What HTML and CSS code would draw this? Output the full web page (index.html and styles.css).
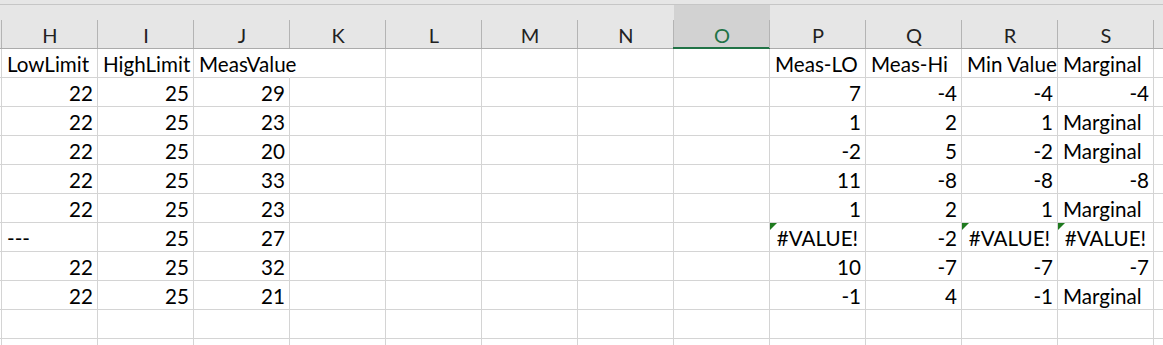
FILE: index.html
```html
<!DOCTYPE html>
<html>
<head>
<meta charset="utf-8">
<link rel="stylesheet" href="styles.css">
</head>
<body>
<div class="sheet">
  <div class="topbar"></div>
  <div class="heads">
    <div class="hd stub"></div>
    <div class="hd">H</div><div class="hd">I</div><div class="hd">J</div><div class="hd">K</div>
    <div class="hd">L</div><div class="hd">M</div><div class="hd">N</div><div class="hd sel">O</div>
    <div class="hd">P</div><div class="hd">Q</div><div class="hd">R</div><div class="hd">S</div>
    <div class="hd tail"></div>
  </div>

  <div class="row">
    <div class="c stub"></div>
    <div class="c">LowLimit</div><div class="c">HighLimit</div><div class="c spill">MeasValue</div><div class="c"></div>
    <div class="c"></div><div class="c"></div><div class="c"></div><div class="c"></div>
    <div class="c">Meas-LO</div><div class="c">Meas-Hi</div><div class="c">Min Value</div><div class="c">Marginal</div>
    <div class="c tail"></div>
  </div>

  <div class="row">
    <div class="c stub"></div>
    <div class="c n">22</div><div class="c n">25</div><div class="c n">29</div><div class="c"></div>
    <div class="c"></div><div class="c"></div><div class="c"></div><div class="c"></div>
    <div class="c n">7</div><div class="c n">-4</div><div class="c n">-4</div><div class="c n">-4</div>
    <div class="c tail"></div>
  </div>

  <div class="row">
    <div class="c stub"></div>
    <div class="c n">22</div><div class="c n">25</div><div class="c n">23</div><div class="c"></div>
    <div class="c"></div><div class="c"></div><div class="c"></div><div class="c"></div>
    <div class="c n">1</div><div class="c n">2</div><div class="c n">1</div><div class="c">Marginal</div>
    <div class="c tail"></div>
  </div>

  <div class="row">
    <div class="c stub"></div>
    <div class="c n">22</div><div class="c n">25</div><div class="c n">20</div><div class="c"></div>
    <div class="c"></div><div class="c"></div><div class="c"></div><div class="c"></div>
    <div class="c n">-2</div><div class="c n">5</div><div class="c n">-2</div><div class="c">Marginal</div>
    <div class="c tail"></div>
  </div>

  <div class="row">
    <div class="c stub"></div>
    <div class="c n">22</div><div class="c n">25</div><div class="c n">33</div><div class="c"></div>
    <div class="c"></div><div class="c"></div><div class="c"></div><div class="c"></div>
    <div class="c n">11</div><div class="c n">-8</div><div class="c n">-8</div><div class="c n">-8</div>
    <div class="c tail"></div>
  </div>

  <div class="row">
    <div class="c stub"></div>
    <div class="c n">22</div><div class="c n">25</div><div class="c n">23</div><div class="c"></div>
    <div class="c"></div><div class="c"></div><div class="c"></div><div class="c"></div>
    <div class="c n">1</div><div class="c n">2</div><div class="c n">1</div><div class="c">Marginal</div>
    <div class="c tail"></div>
  </div>

  <div class="row">
    <div class="c stub"></div>
    <div class="c">---</div><div class="c n">25</div><div class="c n">27</div><div class="c"></div>
    <div class="c"></div><div class="c"></div><div class="c"></div><div class="c"></div>
    <div class="c err">#VALUE!</div><div class="c n">-2</div><div class="c err">#VALUE!</div><div class="c err">#VALUE!</div>
    <div class="c tail"></div>
  </div>

  <div class="row">
    <div class="c stub"></div>
    <div class="c n">22</div><div class="c n">25</div><div class="c n">32</div><div class="c"></div>
    <div class="c"></div><div class="c"></div><div class="c"></div><div class="c"></div>
    <div class="c n">10</div><div class="c n">-7</div><div class="c n">-7</div><div class="c n">-7</div>
    <div class="c tail"></div>
  </div>

  <div class="row">
    <div class="c stub"></div>
    <div class="c n">22</div><div class="c n">25</div><div class="c n">21</div><div class="c"></div>
    <div class="c"></div><div class="c"></div><div class="c"></div><div class="c"></div>
    <div class="c n">-1</div><div class="c n">4</div><div class="c n">-1</div><div class="c">Marginal</div>
    <div class="c tail"></div>
  </div>

  <div class="row">
    <div class="c stub"></div>
    <div class="c"></div><div class="c"></div><div class="c"></div><div class="c"></div>
    <div class="c"></div><div class="c"></div><div class="c"></div><div class="c"></div>
    <div class="c"></div><div class="c"></div><div class="c"></div><div class="c"></div>
    <div class="c tail"></div>
  </div>

  <div class="row">
    <div class="c stub"></div>
    <div class="c"></div><div class="c"></div><div class="c"></div><div class="c"></div>
    <div class="c"></div><div class="c"></div><div class="c"></div><div class="c"></div>
    <div class="c"></div><div class="c"></div><div class="c"></div><div class="c"></div>
    <div class="c tail"></div>
  </div>
</div>
</body>
</html>
```

FILE: styles.css
```css
html, body {
  margin: 0;
  padding: 0;
  background: #ffffff;
  overflow: hidden;
}

.sheet {
  width: 1163px;
  height: 345px;
  overflow: hidden;
  font-family: "Lato", "Carlito", "Liberation Sans", sans-serif;
  color: #000;
}

.topbar {
  height: 4px;
  background: #e6e6e6;
  border-bottom: 1px solid #c6c6c6;
}

.heads {
  display: grid;
  grid-template-columns: 2px repeat(12, 96px) 1fr;
  height: 43px;
  background: #e6e6e6;
  border-bottom: 1px solid #ababab;
}

.hd {
  position: relative;
  display: flex;
  justify-content: center;
  align-items: flex-end;
  font-size: 20px;
  line-height: 24px;
  padding-bottom: 1px;
  color: #222;
  box-sizing: border-box;
}

.hd::after {
  content: "";
  position: absolute;
  right: 0;
  bottom: 0;
  width: 1px;
  height: 28px;
  background: #b4b4b4;
}

.hd.tail::after {
  display: none;
}

.hd.sel {
  background: #d2d2d2;
  color: #217346;
}

.hd.sel::before {
  content: "";
  position: absolute;
  left: -1px;
  right: 0;
  bottom: -1px;
  height: 2px;
  background: #217346;
}

.row {
  display: grid;
  grid-template-columns: 2px repeat(12, 96px) 1fr;
  height: 29px;
}

.c {
  position: relative;
  box-sizing: border-box;
  height: 29px;
  border-right: 1px solid #d4d4d4;
  border-bottom: 1px solid #d4d4d4;
  padding: 0 4px 0 5px;
  font-size: 20.6px;
  line-height: 26px;
  white-space: nowrap;
  overflow: visible;
  display: flex;
  align-items: flex-end;
}

.c.stub {
  padding: 0;
}

.c.tail {
  border-right: none;
}

.c.n {
  justify-content: flex-end;
}

.c.err {
  justify-content: center;
  padding: 0;
}

.c.err::before {
  content: "";
  position: absolute;
  left: 0;
  top: 0;
  width: 0;
  height: 0;
  border-top: 7px solid #1f7a1f;
  border-right: 7px solid transparent;
}

.c.spill {
  border-right-color: transparent;
}
```
